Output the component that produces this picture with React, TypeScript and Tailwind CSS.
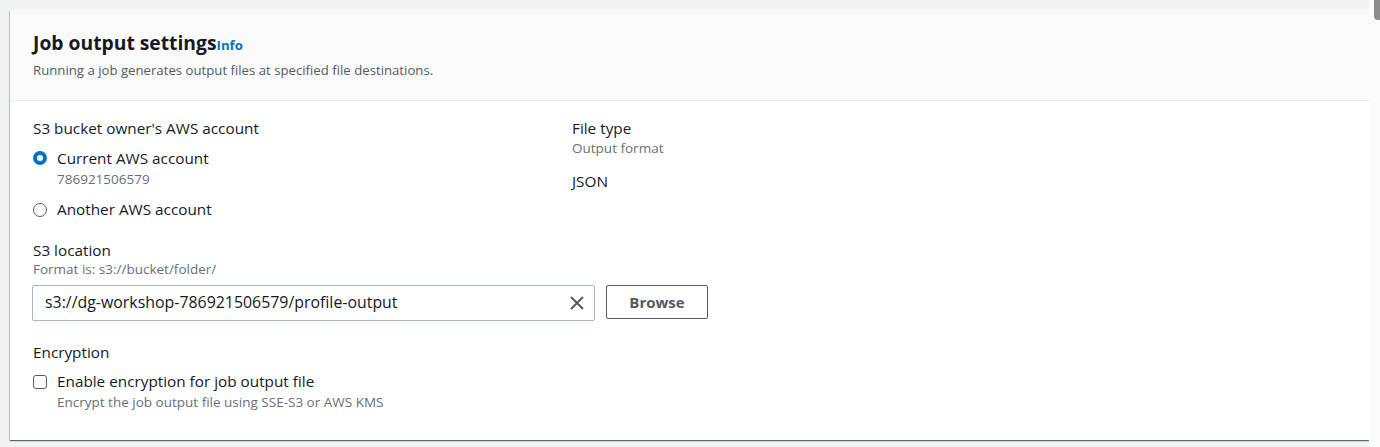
import React from "react";

const font = { fontFamily: '"Open Sans", "Noto Sans", Arial, sans-serif' };

export default function App() {
  return (
    <div className="flex w-[1380px] h-[447px] bg-[#f2f3f3] overflow-hidden text-[#16191f]" style={font}>
      <div className="flex-1 pl-[10px] pt-[10px]">
        <div className="bg-white shadow-[0_1px_1px_0_rgba(0,28,36,0.5),1px_1px_1px_0_rgba(0,28,36,0.15),-1px_1px_1px_0_rgba(0,28,36,0.15)]">
          <div className="bg-[#fafafa] border-b border-[#eaeded] pl-[23px] pt-[21px] pb-[21px]">
            <div className="flex items-baseline">
              <h2 className="text-[19.3px] leading-[24px] font-bold">Job output settings</h2>
              <span className="text-[13.2px] font-bold text-[#0073bb]">Info</span>
            </div>
            <p className="mt-[5px] text-[13.2px] leading-[18px] text-[#545b64]">
              Running a job generates output files at specified file destinations.
            </p>
          </div>
          <div className="pl-[23px] pt-[16px] pb-[29px]">
            <div className="grid grid-cols-[539px_1fr]">
              <div>
                <div className="text-[15.3px] leading-[22px]">S3 bucket owner's AWS account</div>
                <div className="mt-[8px] flex items-start">
                  <span className="mt-[4px] w-[14px] h-[14px] rounded-full border-[4px] border-[#0073bb] bg-white"></span>
                  <div className="ml-[10px]">
                    <div className="text-[15.3px] leading-[22px]">Current AWS account</div>
                    <div className="text-[13.5px] leading-[18px] text-[#687078] mt-[1px]">786921506579</div>
                  </div>
                </div>
                <div className="mt-[10px] flex items-start">
                  <span className="mt-[5px] w-[14px] h-[14px] rounded-full border border-[#545b64] bg-white"></span>
                  <div className="ml-[10px] text-[15.3px] leading-[22px]">Another AWS account</div>
                </div>
              </div>
              <div>
                <div className="text-[15.3px] leading-[22px]">File type</div>
                <div className="text-[13.5px] leading-[18px] text-[#687078]">Output format</div>
                <div className="text-[15.3px] leading-[22px] mt-[13px]">JSON</div>
              </div>
            </div>

            <div className="mt-[19px]">
              <div className="text-[15.3px] leading-[22px]">S3 location</div>
              <div className="text-[13.5px] leading-[18px] text-[#687078] -mt-[1px]">Format is: s3://bucket/folder/</div>
              <div className="mt-[7px] flex items-start">
                <div className="-ml-[1px] w-[563px] h-[36px] border border-[#aab7b8] rounded-[2px] flex items-center pl-[12px] pr-[10px]">
                  <span className="flex-1 text-[15.9px]">s3://dg-workshop-786921506579/profile-output</span>
                  <svg width="14" height="14" viewBox="0 0 14 14" fill="none" stroke="#545b64" strokeWidth="2">
                    <path d="M1 1 L13 13 M13 1 L1 13" />
                  </svg>
                </div>
                <button className="ml-[11px] w-[102px] h-[34px] border border-[#545b64] rounded-[2px] bg-white text-[15px] font-bold text-[#545b64]">
                  Browse
                </button>
              </div>
            </div>

            <div className="mt-[20px]">
              <div className="text-[15.3px] leading-[22px]">Encryption</div>
              <div className="mt-[7px] flex items-start">
                <span className="mt-[5px] w-[14px] h-[14px] rounded-[3px] border border-[#545b64] bg-white"></span>
                <div className="ml-[10px]">
                  <div className="text-[15.3px] leading-[22px]">Enable encryption for job output file</div>
                  <div className="text-[13.5px] leading-[18px] text-[#687078] mt-[1px]">Encrypt the job output file using SSE-S3 or AWS KMS</div>
                </div>
              </div>
            </div>
          </div>
        </div>
      </div>
      <div className="w-[11px] bg-[#fbfbfb] relative">
        <div className="absolute left-[5px] top-0 w-[6px] h-[20px] bg-[#8c8c8c] rounded-bl-[4px]"></div>
      </div>
    </div>
  );
}
